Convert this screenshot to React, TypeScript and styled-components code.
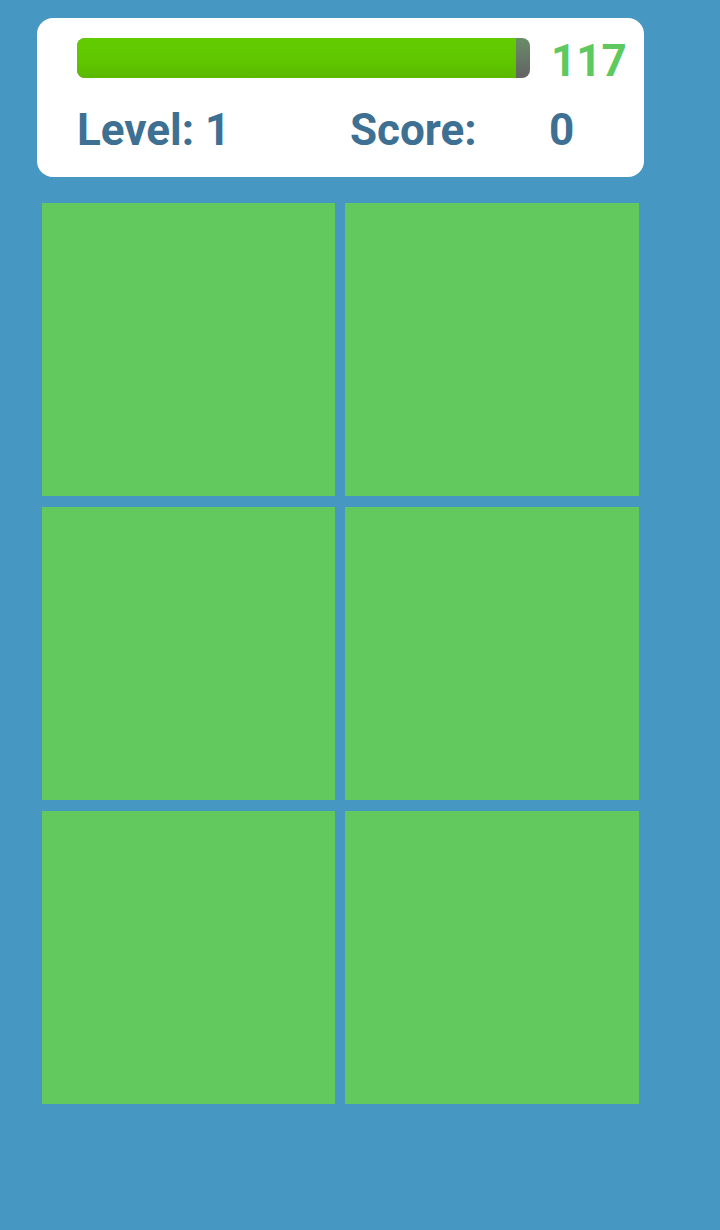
import React from "react";
import styled, { createGlobalStyle } from "styled-components";

const GlobalStyle = createGlobalStyle`
  html, body {
    margin: 0;
    padding: 0;
    background: #4698c2;
    font-family: Roboto, "Liberation Sans", sans-serif;
  }
`;

const Page = styled.div`
  width: 720px;
  height: 1230px;
  background: #4698c2;
  box-sizing: border-box;
  padding: 18px 0 0 37px;
`;

const Panel = styled.div`
  width: 607px;
  height: 159px;
  box-sizing: border-box;
  background: #fff;
  border-radius: 16px;
  padding: 20px 0 0 40px;
`;

const TimerRow = styled.div`
  display: flex;
  align-items: center;
  height: 40px;
`;

const Bar = styled.div`
  position: relative;
  width: 453px;
  height: 40px;
  border-radius: 8px;
  overflow: hidden;
  background: linear-gradient(#6a8c6a, #626262);
`;

const BarFill = styled.div`
  height: 100%;
  background: linear-gradient(#62cc00, #5fc600 60%, #5bb800);
`;

const TimeLeft = styled.span`
  margin-left: 21px;
  margin-top: 6px;
  font-size: 44px;
  font-weight: 700;
  color: #5ec95e;
  line-height: 1;
`;

const StatsRow = styled.div`
  display: flex;
  align-items: center;
  margin-top: 30px;
  font-size: 44px;
  font-weight: 700;
  color: #3d7092;
  line-height: 1;
`;

const Stat = styled.span<{ $w: number }>`
  width: ${({ $w }) => $w}px;
`;

const Board = styled.div`
  display: grid;
  grid-template-columns: 293px 294px;
  grid-auto-rows: 293px;
  column-gap: 10px;
  row-gap: 11px;
  margin: 26px 0 0 5px;
`;

const Tile = styled.div`
  background: #61c95e;
`;

const App: React.FC = () => {
  const total = 120;
  const remaining = 117;
  const level = 1;
  const score = 0;

  return (
    <>
      <GlobalStyle />
      <Page>
        <Panel>
          <TimerRow>
            <Bar>
              <BarFill style={{ width: `${(remaining / total) * 100 - 0.5}%` }} />
            </Bar>
            <TimeLeft>{remaining}</TimeLeft>
          </TimerRow>
          <StatsRow>
            <Stat $w={273}>Level: {level}</Stat>
            <Stat $w={199}>Score:</Stat>
            <Stat $w={60}>{score}</Stat>
          </StatsRow>
        </Panel>
        <Board>
          {Array.from({ length: 6 }).map((_, i) => (
            <Tile key={i} />
          ))}
        </Board>
      </Page>
    </>
  );
};

export default App;
